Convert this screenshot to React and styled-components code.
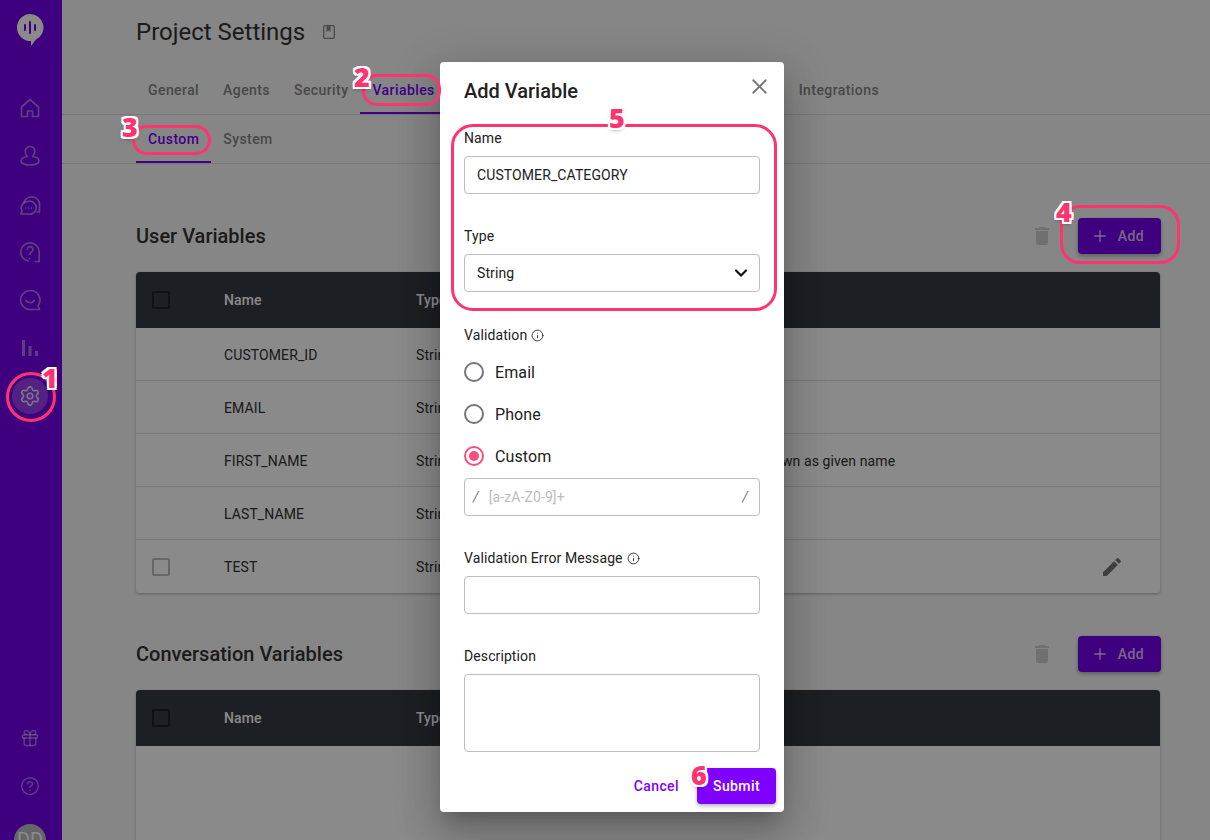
import React from 'react';
import styled, { createGlobalStyle } from 'styled-components';
import { Info, X, Plus, ChevronDown, Gift, CircleHelp, Settings } from 'lucide-react';

const GlobalStyle = createGlobalStyle`
  html, body {
    margin: 0;
    height: 100%;
    overflow: hidden;
    background: #fff;
    font-family: Roboto, "Liberation Sans", sans-serif;
  }
  * { box-sizing: border-box; }
`;

const Page = styled.div`
  display: flex;
  width: 1210px;
  height: 840px;
  overflow: hidden;
  position: relative;
  background: #f8f8f8;
`;

const Sidebar = styled.nav`
  width: 62px;
  flex-shrink: 0;
  background: #7500eb;
  display: flex;
  flex-direction: column;
  align-items: center;
  padding: 14px 2px 0 0;
`;

const LogoWrap = styled.div`
  width: 28px;
  height: 34px;
  flex-shrink: 0;
  margin-bottom: 42px;
`;

const NavItem = styled.div`
  width: 36px;
  height: 36px;
  flex-shrink: 0;
  margin-bottom: 12px;
  border-radius: 50%;
  display: flex;
  align-items: center;
  justify-content: center;
  background: ${(p) => (p.$active ? 'rgba(255,255,255,0.25)' : 'transparent')};
  color: ${(p) => (p.$active ? 'rgba(255,255,255,0.8)' : 'rgba(255,255,255,0.45)')};
`;

const SidebarSpacer = styled.div`
  flex: 1;
`;

const Avatar = styled.div`
  width: 32px;
  height: 32px;
  flex-shrink: 0;
  border-radius: 50%;
  background: #bdbdbd;
  color: #fff;
  display: flex;
  align-items: center;
  justify-content: center;
  font-size: 20px;
  margin: 8px 0 -16px;
`;

const Main = styled.main`
  flex: 1;
  min-width: 0;
  display: flex;
  flex-direction: column;
`;

const TitleRow = styled.div`
  height: 64px;
  flex-shrink: 0;
  padding-left: 74px;
  display: flex;
  align-items: center;
  gap: 18px;
  color: #8a8a8a;
`;

const Title = styled.h1`
  margin: 0;
  font-size: 24px;
  font-weight: 400;
  color: #333;
`;

const Tabs = styled.div`
  height: ${(p) => p.$height}px;
  flex-shrink: 0;
  padding-left: 74px;
  display: flex;
  align-items: flex-end;
  border-bottom: 1px solid #dcdcdc;
`;

const Tab = styled.div`
  height: 48px;
  padding: 2px 12px 0;
  font-size: 14px;
  font-weight: 500;
  letter-spacing: 0.42px;
  display: flex;
  align-items: center;
  color: ${(p) => (p.$active ? '#7a00f5' : '#858585')};
  border-bottom: 2px solid ${(p) => (p.$active ? '#7a00f5' : 'transparent')};
`;

const TabGap = styled.div`
  width: 340px;
`;

const Content = styled.div`
  flex-shrink: 0;
  padding: 0 50px 0 74px;
`;

const SectionHeader = styled.div`
  height: 48px;
  display: flex;
  align-items: center;
  justify-content: space-between;
  margin-top: ${(p) => p.$top}px;
  margin-bottom: 12px;
`;

const SectionTitle = styled.h2`
  margin: 0;
  font-size: 20px;
  font-weight: 500;
  color: #333;
`;

const SectionActions = styled.div`
  display: flex;
  align-items: center;
  gap: 24px;
  margin-right: -1px;
  color: #cfcfcf;
`;

const AddButton = styled.button`
  width: 83px;
  height: 36px;
  border: 0;
  border-radius: 4px;
  padding: 0 4px 0 0;
  background: #7500eb;
  color: rgba(255, 255, 255, 0.75);
  font: 500 14px Roboto, sans-serif;
  letter-spacing: 0.4px;
  display: flex;
  align-items: center;
  justify-content: center;
  gap: 9px;
  box-shadow: 0 2px 4px rgba(0, 0, 0, 0.3);
`;

const TableCard = styled.div`
  border-radius: 4px;
  background: #fff;
  box-shadow: 0 1px 3px rgba(0, 0, 0, 0.3);
  overflow: hidden;
`;

const Row = styled.div`
  display: grid;
  grid-template-columns: 88px 192px 239px 1fr 60px;
  align-items: center;
  height: ${(p) => (p.$head ? 56 : 53)}px;
  padding-top: ${(p) => (p.$head || p.$last ? 0 : 1)}px;
  background: ${(p) => (p.$head ? '#343a42' : '#fff')};
  color: ${(p) => (p.$head ? '#fff' : '#303030')};
  font-size: 14px;
  font-weight: ${(p) => (p.$head ? 500 : 400)};
  letter-spacing: 0.1px;
  border-bottom: ${(p) => (p.$head || p.$last ? 'none' : '1px solid #dcdcdc')};
`;

const CheckCell = styled.div`
  padding-left: 16px;
  display: flex;
`;

const CheckBox = styled.span`
  width: 18px;
  height: 18px;
  border-radius: 2px;
  border: 2px solid ${(p) => (p.$dark ? '#212121' : '#bdbdbd')};
`;

const EditCell = styled.div`
  color: #757575;
  display: flex;
`;

const EmptyBody = styled.div`
  height: 120px;
  background: #fff;
`;

const Backdrop = styled.div`
  position: absolute;
  inset: 0;
  background: rgba(0, 0, 0, 0.46);
`;

const Modal = styled.form`
  position: absolute;
  left: 440px;
  top: 62px;
  width: 344px;
  height: 750px;
  background: #fff;
  border-radius: 4px;
  padding: 16px 24px 0;
  box-shadow: 0 11px 15px -7px rgba(0, 0, 0, 0.2), 0 24px 38px 3px rgba(0, 0, 0, 0.14), 0 9px 46px 8px rgba(0, 0, 0, 0.12);
  display: flex;
  flex-direction: column;
`;

const ModalHead = styled.div`
  display: flex;
  align-items: center;
  justify-content: space-between;
  height: 26px;
  margin-bottom: 24px;
`;

const ModalTitle = styled.h3`
  margin: 0;
  font-size: 20px;
  font-weight: 500;
  color: #212121;
`;

const CloseButton = styled.div`
  color: #757575;
  display: flex;
  margin-right: -12px;
  margin-top: -10px;
`;

const FieldLabel = styled.div`
  height: 20px;
  font-size: 14px;
  line-height: 20px;
  letter-spacing: 0.1px;
  color: #212121;
  display: flex;
  align-items: center;
  gap: 4px;
  margin-bottom: ${(p) => p.$gap ?? 8}px;
`;

const Input = styled.div`
  height: ${(p) => p.$height ?? 38}px;
  flex-shrink: 0;
  border: 1px solid #bdbdbd;
  border-radius: 4px;
  padding: 0 12px;
  font-size: 14px;
  letter-spacing: 0.1px;
  color: #212121;
  display: flex;
  align-items: center;
  justify-content: space-between;
  margin-bottom: ${(p) => p.$gap ?? 32}px;
`;

const RegexInput = styled(Input)`
  padding: 0 11px 0 8px;
  margin-top: 1px;
  color: #757575;
  font-style: italic;
`;

const Placeholder = styled.span`
  flex: 1;
  margin-left: 10px;
  color: #bdbdbd;
  font-style: normal;
  font-size: 14px;
  letter-spacing: 0.1px;
`;

const SelectArrow = styled(ChevronDown)`
  margin-right: -4px;
  color: #111;
`;

const RadioRow = styled.div`
  height: 42px;
  display: flex;
  align-items: center;
  gap: 11px;
  font-size: 16px;
  letter-spacing: 0.1px;
  color: #212121;
`;

const RadioCircle = styled.span`
  width: 20px;
  height: 20px;
  border-radius: 50%;
  border: 2px solid ${(p) => (p.$on ? '#ff4d79' : '#757575')};
  display: flex;
  align-items: center;
  justify-content: center;
  &::after {
    content: '';
    width: 10px;
    height: 10px;
    border-radius: 50%;
    background: ${(p) => (p.$on ? '#ff4d79' : 'transparent')};
  }
`;

const ModalActions = styled.div`
  display: flex;
  justify-content: flex-end;
  align-items: center;
  gap: 18px;
  margin: -16px -16px 0 0;
`;

const CancelText = styled.span`
  font-size: 14px;
  font-weight: 500;
  letter-spacing: 0.4px;
  color: #7f00ff;
`;

const SubmitButton = styled.button`
  width: 79px;
  height: 36px;
  border: 0;
  border-radius: 4px;
  background: #7f00ff;
  color: #fff;
  font: 500 14px Roboto, sans-serif;
  letter-spacing: 0.4px;
  box-shadow: 0 2px 4px rgba(0, 0, 0, 0.3);
`;

const Ring = styled.div`
  position: absolute;
  left: ${(p) => p.$x}px;
  top: ${(p) => p.$y}px;
  width: ${(p) => p.$w}px;
  height: ${(p) => p.$h}px;
  border: 3px solid #ff3370;
  border-radius: ${(p) => p.$r}px;
`;

const Marker = styled.div`
  position: absolute;
  left: ${(p) => p.$x}px;
  top: ${(p) => p.$y}px;
  font-family: "Open Sans", Roboto, sans-serif;
  font-size: 27px;
  line-height: 30px;
  font-weight: 800;
  color: #ff3370;
  text-shadow: -2px 0 0 #fff, 2px 0 0 #fff, 0 -2px 0 #fff, 0 2px 0 #fff, -2px -2px 0 #fff, 2px -2px 0 #fff, -2px 2px 0 #fff, 2px 2px 0 #fff, 0 2px 4px rgba(0, 0, 0, 0.4);
`;

const LogoIcon = () => (
  <svg width="28" height="34" viewBox="0 0 28 34">
    <path d="M14 0a13.500 13.500 0 0 1 6 25.600L15 32v-5A13.500 13.500 0 0 1 14 0z" fill="#fff" />
    <path d="M9 11v5M14 8v11M19 11v5" stroke="#7500eb" strokeWidth="2" strokeLinecap="round" />
  </svg>
);

const strokeProps = { fill: 'none', stroke: 'currentColor', strokeWidth: 1.7, strokeLinecap: 'round', strokeLinejoin: 'round' };

const HomeIcon = () => (
  <svg width="22" height="22" viewBox="0 0 22 22" {...strokeProps}>
    <path d="M2.500 10L11 2.500 19.500 10v9.500h-6v-5.500h-5v5.500h-6z" />
  </svg>
);

const UserIcon = () => (
  <svg width="22" height="22" viewBox="0 0 22 22" {...strokeProps}>
    <path d="M11 1.500c-2.800 0-4.700 2.100-4.700 4.800 0 1.900.9 3.900 2 5.200-3.500.5-6.300 2.200-6.300 4.500 0 2.300 3.800 4 9 4s9-1.700 9-4c0-2.300-2.800-4-6.300-4.500 1.100-1.300 2-3.300 2-5.200 0-2.700-1.900-4.800-4.700-4.800z" />
  </svg>
);

const ChatsIcon = () => (
  <svg width="22" height="22" viewBox="0 0 22 22" {...strokeProps}>
    <path d="M5 9.500A8 8 0 0 1 20.500 10.500c0 2.700 0 6.500 0 8.500h-2.500" />
    <path d="M9 8.500a6.500 6.500 0 1 1 0 12.500H2l1-3A6.500 6.500 0 0 1 9 8.500z" />
    <path d="M6.500 15h.01M9.500 15h.01M12.500 15h.01" />
  </svg>
);

const QuestionIcon = () => (
  <svg width="22" height="22" viewBox="0 0 22 22" {...strokeProps}>
    <path d="M9 20A9.200 9.200 0 1 1 20.200 11v9.500h-4" />
    <path d="M8.300 8.500a2.800 2.800 0 1 1 4.300 2.400c-1 .6-1.500 1.200-1.500 2.300M10.500 17.500h.01" />
  </svg>
);

const SmileIcon = () => (
  <svg width="22" height="22" viewBox="0 0 22 22" {...strokeProps}>
    <path d="M11 1.500a9.500 9.500 0 1 0 0 19h9.500l-1.500-3.800A9.500 9.500 0 0 0 11 1.500z" />
    <path d="M7 11.500c1.500 3 6.500 3 8 0" />
  </svg>
);

const BarsIcon = () => (
  <svg width="16" height="16" viewBox="0 0 16 16" fill="currentColor">
    <rect x="0" y="0" width="3" height="16" />
    <rect x="6.500" y="6" width="3" height="10" />
    <rect x="13" y="11" width="3" height="5" />
  </svg>
);

const BookIcon = () => (
  <svg width="12" height="14" viewBox="0 0 12 14" fill="none" stroke="currentColor" strokeWidth="1.300">
    <rect x="0.700" y="0.700" width="10.600" height="12.600" rx="1" />
    <path d="M3.500 1v6l2-1.500 2 1.500V1" fill="currentColor" stroke="none" />
  </svg>
);

const DeleteIcon = () => (
  <svg width="24" height="24" viewBox="0 0 24 24" fill="currentColor">
    <path d="M6 19c0 1.100.9 2 2 2h8c1.100 0 2-.9 2-2V7H6v12zM19 4h-3.500l-1-1h-5l-1 1H5v2h14V4z" />
  </svg>
);

const EditIcon = () => (
  <svg width="24" height="24" viewBox="0 0 24 24" fill="currentColor">
    <path d="M3 17.250V21h3.750L17.810 9.940l-3.750-3.750L3 17.250zM20.710 7.040a1 1 0 0 0 0-1.410l-2.340-2.340a1 1 0 0 0-1.410 0l-1.830 1.830 3.750 3.750 1.830-1.830z" />
  </svg>
);

const variables = [
  { name: 'CUSTOMER_ID', type: 'String', description: '' },
  { name: 'EMAIL', type: 'String', description: '' },
  { name: 'FIRST_NAME', type: 'String', description: 'First name, also known as given name' },
  { name: 'LAST_NAME', type: 'String', description: '' },
  { name: 'TEST', type: 'String', description: '', custom: true },
];

const HeadRow = () => (
  <Row $head>
    <CheckCell><CheckBox $dark /></CheckCell>
    <div>Name</div>
    <div>Type</div>
  </Row>
);

const App = () => {
  return (
    <Page>
      <GlobalStyle />
      <Sidebar>
        <LogoWrap><LogoIcon /></LogoWrap>
        <NavItem><HomeIcon /></NavItem>
        <NavItem><UserIcon /></NavItem>
        <NavItem><ChatsIcon /></NavItem>
        <NavItem><QuestionIcon /></NavItem>
        <NavItem><SmileIcon /></NavItem>
        <NavItem><BarsIcon /></NavItem>
        <NavItem $active><Settings size={22} strokeWidth={1.7} /></NavItem>
        <SidebarSpacer />
        <NavItem><Gift size={20} strokeWidth={1.7} /></NavItem>
        <NavItem><CircleHelp size={20} strokeWidth={1.7} /></NavItem>
        <Avatar>DD</Avatar>
      </Sidebar>

      <Main>
        <TitleRow>
          <Title>Project Settings</Title>
          <BookIcon />
        </TitleRow>
        <Tabs $height={51}>
          <Tab>General</Tab>
          <Tab>Agents</Tab>
          <Tab>Security</Tab>
          <Tab $active>Variables</Tab>
          <TabGap />
          <Tab>Integrations</Tab>
        </Tabs>
        <Tabs $height={49}>
          <Tab $active>Custom</Tab>
          <Tab>System</Tab>
        </Tabs>
        <Content>
          <SectionHeader $top={48}>
            <SectionTitle>User Variables</SectionTitle>
            <SectionActions>
              <DeleteIcon />
              <AddButton type="button"><Plus size={18} strokeWidth={1.8} />Add</AddButton>
            </SectionActions>
          </SectionHeader>
          <TableCard>
            <HeadRow />
            {variables.map((v, i) => (
              <Row key={v.name} $last={i === variables.length - 1}>
                <CheckCell>{v.custom && <CheckBox />}</CheckCell>
                <div>{v.name}</div>
                <div>{v.type}</div>
                <div>{v.description}</div>
                {v.custom && <EditCell><EditIcon /></EditCell>}
              </Row>
            ))}
          </TableCard>
          <SectionHeader $top={37}>
            <SectionTitle>Conversation Variables</SectionTitle>
            <SectionActions>
              <DeleteIcon />
              <AddButton type="button"><Plus size={18} strokeWidth={1.8} />Add</AddButton>
            </SectionActions>
          </SectionHeader>
          <TableCard>
            <HeadRow />
            <EmptyBody />
          </TableCard>
        </Content>
      </Main>

      <Backdrop />

      <Modal>
        <ModalHead>
          <ModalTitle>Add Variable</ModalTitle>
          <CloseButton><X size={25} strokeWidth={1.7} /></CloseButton>
        </ModalHead>
        <FieldLabel>Name</FieldLabel>
        <Input $gap={32}>CUSTOMER_CATEGORY</Input>
        <FieldLabel>Type</FieldLabel>
        <Input $gap={33}>String<SelectArrow size={20} strokeWidth={2.6} /></Input>
        <FieldLabel $gap={6}>Validation <Info size={13} strokeWidth={1.6} /></FieldLabel>
        <RadioRow><RadioCircle />Email</RadioRow>
        <RadioRow><RadioCircle />Phone</RadioRow>
        <RadioRow><RadioCircle $on />Custom</RadioRow>
        <RegexInput $gap={32}>/<Placeholder>[a-zA-Z0-9]+</Placeholder>/</RegexInput>
        <FieldLabel>Validation Error Message <Info size={13} strokeWidth={1.6} /></FieldLabel>
        <Input />
        <FieldLabel>Description</FieldLabel>
        <Input $height={78} />
        <ModalActions>
          <CancelText>Cancel</CancelText>
          <SubmitButton type="button">Submit</SubmitButton>
        </ModalActions>
      </Modal>

      <Ring $x={6} $y={372} $w={50} $h={50} $r={25} />
      <Ring $x={362} $y={74} $w={79} $h={32} $r={15} />
      <Ring $x={132} $y={125} $w={79} $h={30} $r={15} />
      <Ring $x={1060} $y={205} $w={120} $h={59} $r={20} />
      <Ring $x={451} $y={124} $w={326} $h={187} $r={22} />
      <Marker $x={42} $y={363}>1</Marker>
      <Marker $x={354} $y={62}>2</Marker>
      <Marker $x={122} $y={112}>3</Marker>
      <Marker $x={1056} $y={197}>4</Marker>
      <Marker $x={609} $y={103}>5</Marker>
      <Marker $x={691} $y={760}>6</Marker>
    </Page>
  );
};

export default App;
